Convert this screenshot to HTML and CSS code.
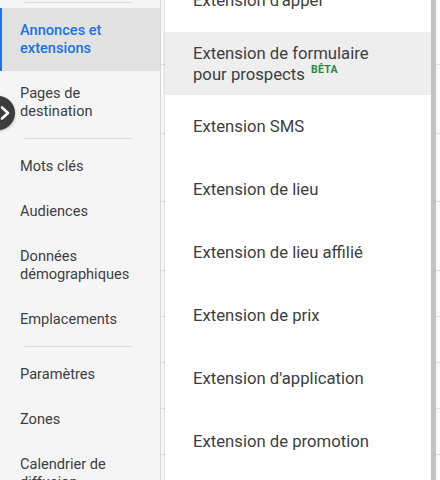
FILE: index.html
```html
<!DOCTYPE html>
<html lang="fr">
  <head>
    <meta charset="UTF-8">
    <meta name="viewport" content="width=device-width, initial-scale=1.0">
    <title>Annonces et extensions</title>
    <link rel="stylesheet" href="styles.css">
  </head>
  <body>
    <div class="page">
      <!-- Left navigation -->
      <nav class="sidebar">
        <div class="divider first"></div>
        <a class="nav-item active">Annonces et<br>extensions</a>
        <a class="nav-item">Pages de<br>destination</a>
        <div class="divider"></div>
        <a class="nav-item">Mots clés</a>
        <a class="nav-item">Audiences</a>
        <a class="nav-item">Données<br>démographiques</a>
        <a class="nav-item">Emplacements</a>
        <div class="divider"></div>
        <a class="nav-item">Paramètres</a>
        <a class="nav-item">Zones</a>
        <a class="nav-item">Calendrier de<br>diffusion</a>
      </nav>

      <!-- Table behind the dropdown -->
      <div class="content">
        <div class="row" style="height: 65px"></div>
        <div class="row" style="height: 69px"></div>
        <div class="row" style="height: 68px"></div>
        <div class="row" style="height: 69px"></div>
        <div class="row" style="height: 46px"></div>
        <div class="row" style="height: 46px"></div>
        <div class="row" style="height: 46px"></div>
        <div class="row" style="height: 46px"></div>
        <div class="row" style="height: 46px"></div>

        <!-- Extension type dropdown -->
        <ul class="menu">
          <li class="menu-item">Extension d'appel</li>
          <li class="menu-item hover">Extension de formulaire<br>pour prospects <span class="beta">BÊTA</span></li>
          <li class="menu-item">Extension SMS</li>
          <li class="menu-item">Extension de lieu</li>
          <li class="menu-item">Extension de lieu affilié</li>
          <li class="menu-item">Extension de prix</li>
          <li class="menu-item">Extension d'application</li>
          <li class="menu-item">Extension de promotion</li>
          <li class="menu-item">Extension d'accroche</li>
        </ul>
      </div>

      <button class="collapse-btn" aria-label="Développer">
        <svg width="12" height="16" viewBox="0 0 12 16">
          <path d="M2 2.5 L8 8 L2 13.5" fill="none" stroke="#fff" stroke-width="2.6" stroke-linecap="round" stroke-linejoin="round"/>
        </svg>
      </button>
    </div>
  </body>
</html>
```

FILE: styles.css
```css
body {
  margin: 0;
  overflow: hidden;
  font-family: Roboto, "Noto Sans", Arial, sans-serif;
  background: #fafafa;
}

.page {
  position: relative;
  display: flex;
  width: 440px;
  height: 480px;
  overflow: hidden;
}

.sidebar {
  display: flex;
  flex-direction: column;
  flex: 0 0 160px;
  background: #f5f5f5;
  border-right: 1px solid #d6d6d6;
}

.divider {
  height: 1px;
  margin: 4px 27px 5px 25px;
  background: #dcdcdc;
  flex-shrink: 0;
}

.divider.first {
  margin-top: 2px;
}

.nav-item {
  display: block;
  flex-shrink: 0;
  padding: 13px 10px 14px 20px;
  font-size: 14.6px;
  line-height: 18px;
  color: #3c4043;
  text-decoration: none;
}

.nav-item.active {
  padding-left: 18px;
  border-left: 2px solid #1a73e8;
  background: #e2e2e2;
  color: #1a73e8;
  font-weight: 500;
}

.content {
  position: relative;
  flex: 1;
  background: #fafafa;
}

.row {
  border-bottom: 1px solid #e0e0e0;
  box-sizing: border-box;
}

.menu {
  position: absolute;
  top: -31px;
  left: 4px;
  width: 266px;
  margin: 0;
  padding: 0;
  list-style: none;
  background: #fff;
  border-right: 5px solid #c2c2c2;
  box-shadow: -1px 0 2px rgba(0, 0, 0, 0.12);
}

.menu-item {
  display: flex;
  align-items: center;
  height: 63px;
  padding: 0 28px;
  font-size: 16.7px;
  line-height: 21px;
  color: #3c4043;
}

.menu-item.hover {
  display: block;
  box-sizing: border-box;
  padding-top: 10.5px;
  background: #eeeeee;
}

.beta {
  position: relative;
  top: -7px;
  margin-left: 2px;
  font-size: 10.5px;
  font-weight: 700;
  letter-spacing: 0.3px;
  color: #1e8e3e;
}

.collapse-btn {
  position: absolute;
  top: 96px;
  left: -19px;
  width: 34px;
  height: 34px;
  padding: 0 0 0 16px;
  border: none;
  border-radius: 50%;
  background: #3c3c3c;
  box-shadow: 0 1px 3px rgba(0, 0, 0, 0.3);
  display: flex;
  align-items: center;
  justify-content: center;
  cursor: pointer;
}
```
